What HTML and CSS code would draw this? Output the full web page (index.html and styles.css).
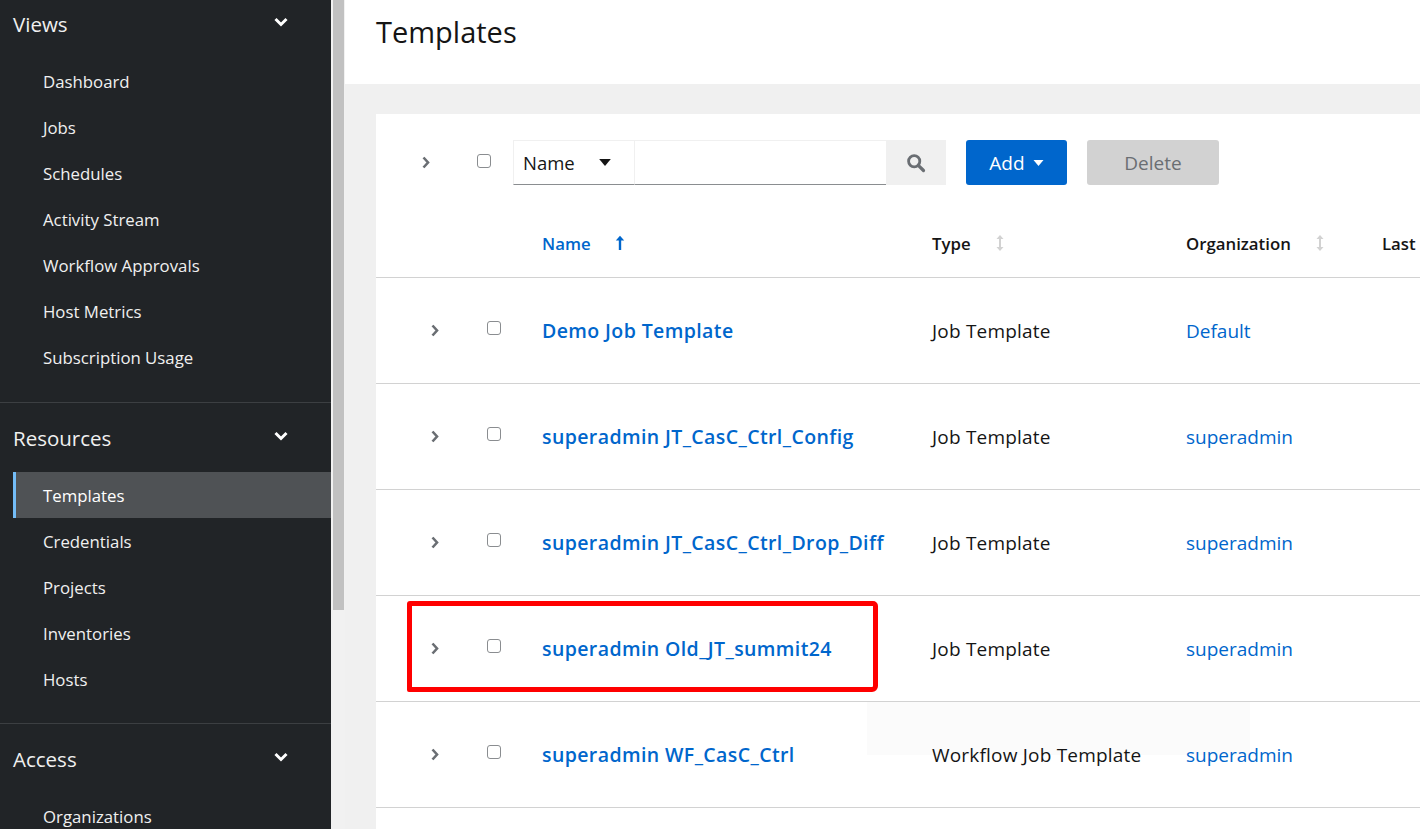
FILE: index.html
```html
<!DOCTYPE html>
<html>
<head>
<meta charset="utf-8">
<link rel="stylesheet" href="styles.css">
</head>
<body>
<aside class="sidebar">
  <div class="group">
    <div class="group-title"><span>Views</span><svg class="down" viewBox="0 0 14 10"><path d="M1.5 2 L7 7.5 L12.5 2" fill="none" stroke="#fff" stroke-width="3"/></svg></div>
    <ul class="nav">
      <li>Dashboard</li>
      <li>Jobs</li>
      <li>Schedules</li>
      <li>Activity Stream</li>
      <li>Workflow Approvals</li>
      <li>Host Metrics</li>
      <li>Subscription Usage</li>
    </ul>
  </div>
  <div class="group">
    <div class="group-title"><span>Resources</span><svg class="down" viewBox="0 0 14 10"><path d="M1.5 2 L7 7.5 L12.5 2" fill="none" stroke="#fff" stroke-width="3"/></svg></div>
    <ul class="nav">
      <li class="active">Templates</li>
      <li>Credentials</li>
      <li>Projects</li>
      <li>Inventories</li>
      <li>Hosts</li>
    </ul>
  </div>
  <div class="group">
    <div class="group-title"><span>Access</span><svg class="down" viewBox="0 0 14 10"><path d="M1.5 2 L7 7.5 L12.5 2" fill="none" stroke="#fff" stroke-width="3"/></svg></div>
    <ul class="nav">
      <li>Organizations</li>
    </ul>
  </div>
</aside>
<div class="scrollbar"><div class="thumb"></div></div>
<main class="main">
  <header class="page-header"><h1>Templates</h1></header>
  <section class="card">
    <div class="toolbar">
      <svg class="chev tb-chev" viewBox="0 0 8 13"><path d="M1.5 1.5 L6 6.5 L1.5 11.5" fill="none" stroke="#6a6e73" stroke-width="2.6"/></svg>
      <span class="checkbox tb-check"></span>
      <div class="select"><span>Name</span><svg class="caret" viewBox="0 0 10 6"><path d="M0 0 H10 L5 6 Z" fill="#151515"/></svg></div>
      <div class="search-input"></div>
      <div class="search-btn"><svg viewBox="0 0 20 20" width="20" height="20"><circle cx="8.2" cy="8.2" r="5.6" fill="none" stroke="#6a6e73" stroke-width="2.8"/><path d="M12.3 12.3 L17.5 17.5" stroke="#6a6e73" stroke-width="3.2" stroke-linecap="round"/></svg></div>
      <button class="btn-add">Add <svg class="caret" viewBox="0 0 10 6"><path d="M0 0 H10 L5 6 Z" fill="#fff"/></svg></button>
      <button class="btn-delete">Delete</button>
    </div>
    <div class="row head">
      <div class="c-exp"></div>
      <div class="c-chk"></div>
      <div class="c-name"><span class="sorted">Name</span><svg class="sort-up" viewBox="0 0 10 16"><path d="M5 15 V3" stroke="#0066cc" stroke-width="2.4"/><path d="M0.8 5.5 L5 0.8 L9.2 5.5 Z" fill="#0066cc"/></svg></div>
      <div class="c-type">Type<svg class="sort" viewBox="0 0 10 18"><path d="M5 3 V15" stroke="#d2d2d2" stroke-width="2"/><path d="M1.5 5 L5 1 L8.5 5 Z M1.5 13 L5 17 L8.5 13 Z" fill="#d2d2d2"/></svg></div>
      <div class="c-org">Organization<svg class="sort" viewBox="0 0 10 18"><path d="M5 3 V15" stroke="#d2d2d2" stroke-width="2"/><path d="M1.5 5 L5 1 L8.5 5 Z M1.5 13 L5 17 L8.5 13 Z" fill="#d2d2d2"/></svg></div>
      <div class="c-last">Last</div>
    </div>
    <div class="row">
      <div class="c-exp"><svg class="chev" viewBox="0 0 8 13"><path d="M1.5 1.5 L6 6.5 L1.5 11.5" fill="none" stroke="#6a6e73" stroke-width="2.6"/></svg></div>
      <div class="c-chk"><span class="checkbox"></span></div>
      <div class="c-name link">Demo Job Template</div>
      <div class="c-type">Job Template</div>
      <div class="c-org org">Default</div>
      <div class="c-last"></div>
    </div>
    <div class="row">
      <div class="c-exp"><svg class="chev" viewBox="0 0 8 13"><path d="M1.5 1.5 L6 6.5 L1.5 11.5" fill="none" stroke="#6a6e73" stroke-width="2.6"/></svg></div>
      <div class="c-chk"><span class="checkbox"></span></div>
      <div class="c-name link">superadmin JT_CasC_Ctrl_Config</div>
      <div class="c-type">Job Template</div>
      <div class="c-org org">superadmin</div>
      <div class="c-last"></div>
    </div>
    <div class="row">
      <div class="c-exp"><svg class="chev" viewBox="0 0 8 13"><path d="M1.5 1.5 L6 6.5 L1.5 11.5" fill="none" stroke="#6a6e73" stroke-width="2.6"/></svg></div>
      <div class="c-chk"><span class="checkbox"></span></div>
      <div class="c-name link">superadmin JT_CasC_Ctrl_Drop_Diff</div>
      <div class="c-type">Job Template</div>
      <div class="c-org org">superadmin</div>
      <div class="c-last"></div>
    </div>
    <div class="row">
      <div class="c-exp"><svg class="chev" viewBox="0 0 8 13"><path d="M1.5 1.5 L6 6.5 L1.5 11.5" fill="none" stroke="#6a6e73" stroke-width="2.6"/></svg></div>
      <div class="c-chk"><span class="checkbox"></span></div>
      <div class="c-name link">superadmin Old_JT_summit24</div>
      <div class="c-type">Job Template</div>
      <div class="c-org org">superadmin</div>
      <div class="c-last"></div>
    </div>
    <div class="row">
      <div class="c-exp"><svg class="chev" viewBox="0 0 8 13"><path d="M1.5 1.5 L6 6.5 L1.5 11.5" fill="none" stroke="#6a6e73" stroke-width="2.6"/></svg></div>
      <div class="c-chk"><span class="checkbox"></span></div>
      <div class="c-name link">superadmin WF_CasC_Ctrl</div>
      <div class="c-type">Workflow Job Template</div>
      <div class="c-org org">superadmin</div>
      <div class="c-last"></div>
    </div>
    <div class="ghost"></div>
    <div class="highlight"></div>
  </section>
</main>
</body>
</html>
```

FILE: styles.css
```css
* { box-sizing: border-box; }
html, body { margin: 0; padding: 0; }
body {
  width: 1420px;
  height: 829px;
  overflow: hidden;
  display: flex;
  font-family: "Open Sans", "Liberation Sans", sans-serif;
  color: #151515;
  background: #f0f0f0;
}
.sidebar {
  width: 331px;
  flex: none;
  background: #212427;
  color: #f0f0f0;
}
.group { border-bottom: 1px solid #3c3f42; }
.group:first-child { padding-bottom: 22px; }
.group:nth-child(2) { padding-bottom: 21px; }
.group:last-child { border-bottom: none; }
.group-title {
  height: 48px;
  display: flex;
  align-items: center;
  justify-content: space-between;
  padding: 0 43px 0 13px;
  font-size: 20.5px;
  color: #f0f0f0;
}
.group + .group .group-title { margin-top: 11px; }
.down { width: 14px; height: 10px; margin-top: -4px; }
.nav { list-style: none; margin: 0; padding: 10px 0 0; }
.nav li {
  height: 46px;
  display: flex;
  align-items: center;
  margin-left: 13px;
  padding-left: 30px;
  font-size: 16.8px;
  color: #f0f0f0;
}
.nav li.active {
  background: #4f5255;
  border-left: 3px solid #73bcf7;
  padding-left: 27px;
  color: #fff;
}
.scrollbar {
  width: 14px;
  flex: none;
  background: #f1f1f1;
  padding-left: 2px;
}
.thumb { width: 11px; height: 610px; background: #c1c1c1; }
.main { flex: 1; background: #f0f0f0; }
.page-header {
  height: 84px;
  background: #fff;
  padding-left: 31px;
  display: flex;
  align-items: center;
}
.page-header h1 {
  margin: 0;
  font-size: 29px;
  font-weight: 400;
  margin-top: -22px;
}
.card {
  position: relative;
  margin: 30px 0 0 31px;
  background: #fff;
  height: 740px;
}
.toolbar {
  display: flex;
  align-items: center;
  height: 71px;
  padding-top: 26px;
}
.tb-chev { width: 8px; height: 13px; margin-left: 46px; }
.checkbox {
  display: inline-block;
  width: 14px;
  height: 14px;
  border: 1px solid #8a8d90;
  border-radius: 3px;
  background: #fff;
}
.tb-check { margin-left: 47px; margin-top: -3px; }
.select {
  margin-left: 22px;
  width: 122px;
  height: 45px;
  border: 1px solid #f0f0f0;
  border-bottom: 1px solid #8a8d90;
  display: flex;
  align-items: center;
  padding-left: 9px;
  font-size: 18.5px;
}
.select .caret { width: 12px; height: 7px; margin-left: 24px; }
.search-input {
  width: 251px;
  height: 45px;
  border-top: 1px solid #f0f0f0;
  border-bottom: 1px solid #8a8d90;
}
.search-btn {
  width: 60px;
  height: 45px;
  background: #f0f0f0;
  display: flex;
  align-items: center;
  justify-content: center;
}
button {
  font-family: inherit;
  border: none;
  border-radius: 3px;
  height: 45px;
  font-size: 19px;
  padding: 0;
}
.btn-add {
  margin-left: 20px;
  width: 101px;
  background: #0066cc;
  color: #fff;
  display: flex;
  align-items: center;
  justify-content: center;
  gap: 8px;
}
.btn-add .caret { width: 11px; height: 6px; }
.btn-delete {
  margin-left: 20px;
  width: 132px;
  background: #d2d2d2;
  color: #6a6e73;
}
.row {
  position: relative;
  z-index: 1;
  display: flex;
  align-items: center;
  height: 106px;
  border-bottom: 1px solid #d2d2d2;
  font-size: 19px;
  letter-spacing: 0.2px;
  white-space: nowrap;
}
.row.head {
  height: 93px;
  padding-top: 24px;
  font-size: 16.8px;
  font-weight: 600;
  letter-spacing: 0;
}
.c-exp { width: 100px; padding-left: 55px; display: flex; align-items: center; }
.chev { width: 8px; height: 13px; }
.c-chk { width: 66px; padding-left: 11px; display: flex; align-items: center; }
.c-chk .checkbox { margin-top: -6px; }
.c-name { width: 390px; display: flex; align-items: center; }
.c-type { width: 254px; display: flex; align-items: center; }
.c-org { width: 196px; display: flex; align-items: center; }
.c-last { flex: 1; }
.sorted { color: #0066cc; }
.sort-up { width: 10px; height: 16px; margin-left: 24px; }
.sort { width: 10px; height: 18px; margin-left: 24px; }
.link { color: #0066cc; font-weight: 600; font-size: 19.5px; letter-spacing: 0.4px; }
.org { color: #0066cc; letter-spacing: 0; }
.ghost {
  position: absolute;
  z-index: 0;
  left: 491px;
  top: 587px;
  width: 383px;
  height: 54px;
  background: #fbfbfb;
}
.highlight {
  position: absolute;
  z-index: 2;
  left: 31px;
  top: 487px;
  width: 471px;
  height: 91px;
  border: 5px solid #ff0000;
  border-radius: 3px 5px 6px 2px;
}
```
